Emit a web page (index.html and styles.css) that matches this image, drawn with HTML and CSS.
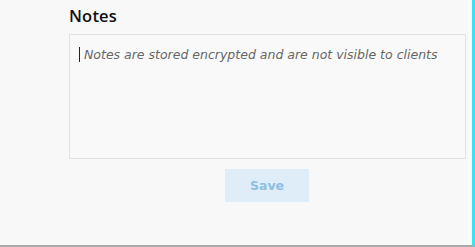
FILE: index.html
```html
<!DOCTYPE html>
<html lang="en">
<head>
    <meta charset="UTF-8">
    <title>Notes</title>
    <link rel="stylesheet" href="styles.css">
</head>
<body>
    <div class="page">
        <div class="notes">
            <h2>Notes</h2>
            <div class="notes-box">
                <span class="caret"></span><span class="placeholder">Notes are stored encrypted and are not visible to clients</span>
            </div>
            <div class="actions">
                <button class="save-btn" disabled>Save</button>
            </div>
        </div>
    </div>
</body>
</html>
```

FILE: styles.css
```css
html, body {
    margin: 0;
    padding: 0;
}
body {
    font-family: 'Open Sans', 'Noto Sans', sans-serif;
    background-color: #f8f8f8;
    color: #111;
}
.page {
    box-sizing: border-box;
    width: 475px;
    height: 247px;
    border-right: 3px solid #33e6f2;
    border-bottom: 2px solid #a9a9a9;
    box-shadow: inset -4px 0 0 #fbfbfb;
}
.notes {
    padding: 6px 0 0 69px;
    width: 397px;
}
.notes h2 {
    margin: 0 0 8px;
    font-size: 16.5px;
    font-weight: 600;
    line-height: 20px;
    color: #111;
    letter-spacing: 0.2px;
}
.notes-box {
    box-sizing: border-box;
    width: 397px;
    height: 125px;
    border: 1px solid #e3e3e3;
    background-color: #f9f9f9;
    padding: 11px 0 0 9px;
    display: flex;
    align-items: flex-start;
}
.caret {
    display: inline-block;
    width: 1px;
    height: 15px;
    margin-top: 1px;
    background-color: #222;
    margin-right: 4px;
}
.placeholder {
    font-family: 'DejaVu Sans', sans-serif;
    font-style: italic;
    font-size: 12.5px;
    line-height: 17px;
    color: #666;
    white-space: nowrap;
}
.actions {
    display: flex;
    justify-content: center;
    padding: 10px 0 0 0;
    width: 396px;
}
.save-btn {
    width: 84px;
    height: 33px;
    border: none;
    background-color: #deedf8;
    color: #8dbfe3;
    font-family: 'DejaVu Sans', sans-serif;
    font-size: 12.5px;
    font-weight: 700;
    cursor: default;
}
```
